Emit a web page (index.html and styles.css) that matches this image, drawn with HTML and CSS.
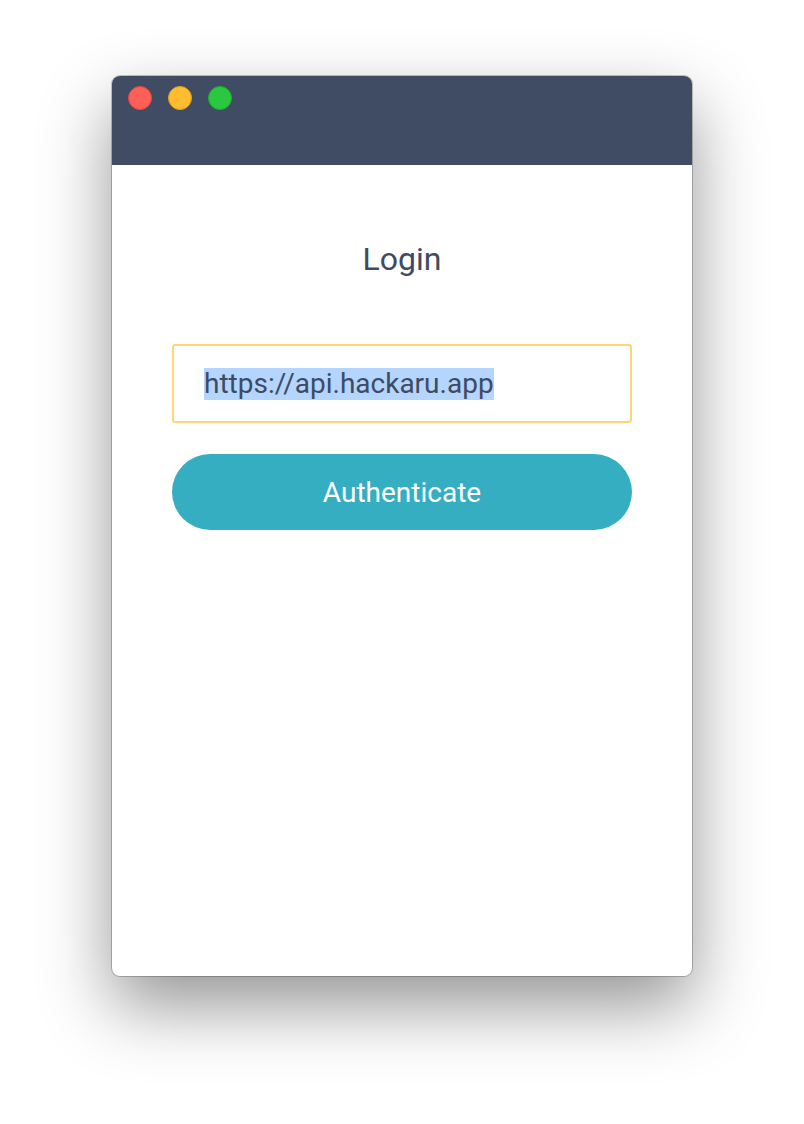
FILE: index.html
```html
<!DOCTYPE html>
<html>
<head>
<meta charset="utf-8">
<link rel="stylesheet" href="styles.css">
</head>
<body>
<div class="window">
  <div class="titlebar">
    <span class="dot red"></span>
    <span class="dot yellow"></span>
    <span class="dot green"></span>
  </div>
  <div class="content">
    <h1 class="title">Login</h1>
    <div class="field"><span class="sel">https://api.hackaru.app</span></div>
    <button class="btn">Authenticate</button>
  </div>
</div>
</body>
</html>
```
FILE: styles.css
```css
html, body { margin: 0; padding: 0; background: #fff; }
body {
  width: 804px; height: 1124px;
  font-family: Roboto, "Noto Sans", sans-serif;
  display: flex; justify-content: center; align-items: flex-start;
}
.window {
  margin-top: 76px;
  width: 580px; height: 900px;
  border-radius: 8px;
  overflow: hidden;
  background: #fff;
  box-shadow: 0 0 0 1px rgba(0,0,0,0.22), 0 30px 70px 0 rgba(0,0,0,0.42);
  display: flex; flex-direction: column;
}
.titlebar {
  height: 89px; flex: none;
  background: #404c64;
  display: flex; align-items: flex-start; gap: 16px;
  padding: 10px 0 0 16px;
  box-sizing: border-box;
}
.dot { width: 24px; height: 24px; border-radius: 50%; box-sizing: border-box; }
.red { background: #fe5f57; border: 1px solid #e2463f; }
.yellow { background: #febc2e; border: 1px solid #e1a116; }
.green { background: #2ac840; border: 1px solid #1dad2b; }
.content {
  display: flex; flex-direction: column; align-items: center;
  padding-top: 74px;
}
.title {
  margin: 0; font-weight: 400; font-size: 32px; line-height: 40px;
  color: #3f4a63;
}
.field {
  margin-top: 65px;
  width: 460px; height: 79px; box-sizing: border-box;
  border: 2px solid #fed577; border-radius: 3px;
  display: flex; align-items: center; padding-left: 30px;
  font-size: 28px; color: #3f4a63;
}
.sel { background: #b4d5fd; line-height: 32px; }
.btn {
  margin-top: 31px;
  width: 460px; height: 76px; border: none; border-radius: 38px;
  background: #36aec2; color: #fff;
  font-family: Roboto, sans-serif; font-size: 28px;
}
```
